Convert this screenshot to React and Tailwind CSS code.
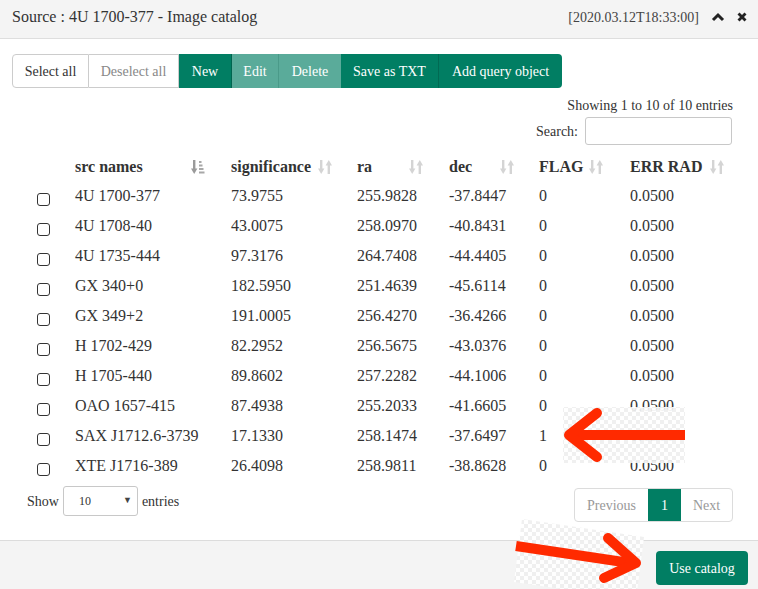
import React from "react";

const rows = [
  ["4U 1700-377", "73.9755", "255.9828", "-37.8447", "0", "0.0500"],
  ["4U 1708-40", "43.0075", "258.0970", "-40.8431", "0", "0.0500"],
  ["4U 1735-444", "97.3176", "264.7408", "-44.4405", "0", "0.0500"],
  ["GX 340+0", "182.5950", "251.4639", "-45.6114", "0", "0.0500"],
  ["GX 349+2", "191.0005", "256.4270", "-36.4266", "0", "0.0500"],
  ["H 1702-429", "82.2952", "256.5675", "-43.0376", "0", "0.0500"],
  ["H 1705-440", "89.8602", "257.2282", "-44.1006", "0", "0.0500"],
  ["OAO 1657-415", "87.4938", "255.2033", "-41.6605", "0", "0.0500"],
  ["SAX J1712.6-3739", "17.1330", "258.1474", "-37.6497", "1", "0.0500"],
  ["XTE J1716-389", "26.4098", "258.9811", "-38.8628", "0", "0.0500"],
];

function SortIcon() {
  return (
    <svg width="14" height="16" viewBox="0 0 14 16" className="shrink-0">
      <rect x="2" y="1" width="2.4" height="10" fill="#d4d4d4" />
      <polygon points="0,9.5 6.4,9.5 3.2,15" fill="#d4d4d4" />
      <rect x="9.6" y="5" width="2.4" height="10" fill="#d4d4d4" />
      <polygon points="7.6,6.5 14,6.5 10.8,1" fill="#d4d4d4" />
    </svg>
  );
}

function SortActive() {
  return (
    <svg width="14" height="16" viewBox="0 0 14 16" className="shrink-0">
      <rect x="2" y="1" width="2.4" height="10" fill="#9a9a9a" />
      <polygon points="0,9.5 6.4,9.5 3.2,15" fill="#9a9a9a" />
      <rect x="8" y="2" width="2.5" height="2" fill="#a8a8a8" />
      <rect x="8" y="5.5" width="3.5" height="2" fill="#a8a8a8" />
      <rect x="8" y="9" width="4.5" height="2" fill="#a8a8a8" />
      <rect x="8" y="12.5" width="5.5" height="2" fill="#a8a8a8" />
    </svg>
  );
}

const cols = "grid grid-cols-[39px_156px_126px_92px_90px_91px_120px]";

export default function App() {
  const serif = { fontFamily: '"Liberation Serif", "Times New Roman", serif' };
  return (
    <div
      className="relative w-[758px] h-[589px] overflow-hidden bg-white text-[#333] flex flex-col"
      style={serif}
    >
      {/* Header */}
      <div className="h-[39px] shrink-0 bg-[#f4f4f4] border-b border-[#dedede] flex items-center justify-between pl-[12px] pr-[11px] pb-[4px]">
        <div className="text-[16px]">Source : 4U 1700-377 - Image catalog</div>
        <div className="flex items-center">
          <span className="text-[14px] text-[#444]">[2020.03.12T18:33:00]</span>
          <svg width="14" height="10" viewBox="0 0 14 10" className="ml-[12px]">
            <polyline points="2,8 7,3 12,8" fill="none" stroke="#222" strokeWidth="3" />
          </svg>
          <svg width="10" height="10" viewBox="0 0 10 10" className="ml-[12px]">
            <line x1="1.5" y1="1.5" x2="8.5" y2="8.5" stroke="#222" strokeWidth="2.8" />
            <line x1="8.5" y1="1.5" x2="1.5" y2="8.5" stroke="#222" strokeWidth="2.8" />
          </svg>
        </div>
      </div>

      {/* Buttons */}
      <div className="mt-[15px] ml-[12px] flex h-[34px] text-[14px]">
        <div className="w-[77px] flex items-center justify-center border border-[#ccc] rounded-l-[4px] bg-white text-[#333]">
          Select all
        </div>
        <div className="w-[90px] flex items-center justify-center border border-l-0 border-[#ccc] bg-white text-[#888]">
          Deselect all
        </div>
        <div className="w-[53px] flex items-center justify-center bg-[#017e63] text-white border-r border-[#00654f]">
          New
        </div>
        <div className="w-[47px] flex items-center justify-center bg-[#5aab9a] text-white border-r border-[#4a9a89]">
          Edit
        </div>
        <div className="w-[62px] flex items-center justify-center bg-[#5aab9a] text-white">
          Delete
        </div>
        <div className="w-[98px] flex items-center justify-center bg-[#017e63] text-white border-r border-[#016a53]">
          Save as TXT
        </div>
        <div className="w-[123px] flex items-center justify-center bg-[#017e63] text-white rounded-r-[4px]">
          Add query object
        </div>
      </div>

      {/* Info & search */}
      <div className="mt-[8px] pr-[25px] text-right text-[14px] leading-[20px]">
        Showing 1 to 10 of 10 entries
      </div>
      <div className="mt-[1px] pr-[26px] flex justify-end items-center text-[14px]">
        <span className="mr-[7px]">Search:</span>
        <div className="w-[147px] h-[28px] border border-[#c8c8c8] rounded-[3px] bg-white" />
      </div>

      {/* Table */}
      <div className="mt-[4px] ml-[28px] text-[16px]">
        <div className={`${cols} h-[32px] items-center font-bold pt-[4px]`}>
          <div />
          <div className="flex items-center justify-between pl-[8px] pr-[18px]">
            <span>src names</span>
            <SortActive />
          </div>
          <div className="flex items-center justify-between pl-[8px] pr-[17px]">
            <span>significance</span>
            <SortIcon />
          </div>
          <div className="flex items-center justify-between pl-[8px] pr-[18px]">
            <span>ra</span>
            <SortIcon />
          </div>
          <div className="flex items-center justify-between pl-[8px] pr-[17px]">
            <span>dec</span>
            <SortIcon />
          </div>
          <div className="flex items-center justify-between pl-[8px] pr-[19px]">
            <span>FLAG</span>
            <SortIcon />
          </div>
          <div className="flex items-center justify-between pl-[8px] pr-[18px]">
            <span>ERR RAD</span>
            <SortIcon />
          </div>
        </div>
        {rows.map((r, i) => (
          <div key={i} className={`${cols} h-[30px] items-center`}>
            <div className="pl-[9px] flex">
              <span className="mt-[7px] w-[13px] h-[13px] border border-[#333] rounded-[3px] bg-white" />
            </div>
            {r.map((c, j) => (
              <div key={j} className="pl-[8px] whitespace-nowrap">
                {c}
              </div>
            ))}
          </div>
        ))}
      </div>

      {/* Bottom controls */}
      <div className="mt-[5px] flex justify-between items-start pl-[27px] pr-[25px] text-[14px]">
        <div className="flex items-center h-[30px]">
          <span>Show</span>
          <div className="ml-[4px] w-[75px] h-[30px] border border-[#c8c8c8] rounded-[3px] flex items-center justify-between pl-[15px] pr-[5px] text-[12px]">
            <span>10</span>
            <span className="text-[9px] text-[#444]">▼</span>
          </div>
          <span className="ml-[4px]">entries</span>
        </div>
        <div className="mt-[2px] flex h-[34px] border border-[#dcdcdc] rounded-[4px] overflow-hidden">
          <div className="w-[73px] flex items-center justify-center text-[#999]">Previous</div>
          <div className="w-[33px] flex items-center justify-center bg-[#017e63] text-white">1</div>
          <div className="w-[51px] flex items-center justify-center text-[#999]">Next</div>
        </div>
      </div>

      {/* Footer */}
      <div className="mt-auto h-[49px] shrink-0 border-t border-[#dcdcdc] bg-[#f4f4f4] flex items-start justify-end pr-[10px] pt-[10px]">
        <div className="w-[92px] h-[34px] rounded-[4px] bg-[#017e63] text-white text-[14px] flex items-center justify-center">
          Use catalog
        </div>
      </div>

      {/* Annotation arrows overlay */}
      <svg className="absolute left-0 top-0 pointer-events-none" width="758" height="589" viewBox="0 0 758 589">
        <defs>
          <pattern id="chk" width="8" height="8" patternUnits="userSpaceOnUse">
            <rect width="8" height="8" fill="#ffffff" />
            <rect width="4" height="4" fill="#efefef" />
            <rect x="4" y="4" width="4" height="4" fill="#efefef" />
          </pattern>
        </defs>
        <rect x="563" y="407" width="122" height="56" fill="url(#chk)" opacity="0.93" />
        <line x1="572" y1="435" x2="685" y2="435" stroke="#ff2a00" strokeWidth="10" />
        <polyline points="597,413 569,435 597,457" fill="none" stroke="#ff2a00" strokeWidth="10" strokeLinecap="round" strokeLinejoin="round" />

        <polygon points="522,519 644,537 636,600 514,582" fill="url(#chk)" opacity="0.93" />
        <line x1="516" y1="546" x2="630" y2="563" stroke="#ff2a00" strokeWidth="10" />
        <polyline points="608,538 636,563 604,578" fill="none" stroke="#ff2a00" strokeWidth="10" strokeLinecap="round" strokeLinejoin="round" />
      </svg>
    </div>
  );
}
